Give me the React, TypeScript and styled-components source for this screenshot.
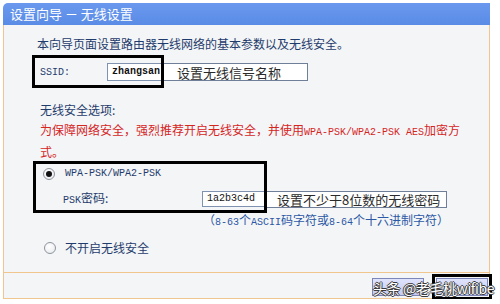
import React from "react";
import styled, { createGlobalStyle } from "styled-components";

const CJK = `"Noto Sans CJK SC", "Noto Sans", sans-serif`;
const MONO = `"Liberation Mono", "DejaVu Sans Mono", monospace`;

const GlobalStyle = createGlobalStyle`
  html, body { margin: 0; padding: 0; background: #ffffff; overflow: hidden; }
  body { font-family: ${CJK}; }
  * { box-sizing: border-box; }
`;

const Frame = styled.div`
  margin: 3px 0 0 3px;
  width: 487px;
`;

const TitleBar = styled.div`
  height: 22px;
  padding-left: 7px;
  background: linear-gradient(#6a98ee, #5a8ce6);
  border-radius: 5px 0 0 0;
  color: #ffffff;
  font: 13px/22px ${CJK};
`;

const Panel = styled.div`
  border: 1px solid #f0c68e;
  border-top: none;
  background: #f4f5f7;
`;

const Content = styled.div`
  height: 247px;
  padding: 11px 0 0 33px;
  color: #1f3c6c;
  font: 12px/16px ${CJK};
`;

const Intro = styled.div`
  line-height: 16px;
`;

const Row = styled.div<{ $align?: string }>`
  display: flex;
  align-items: ${(p) => p.$align || "center"};
`;

const MarkBox = styled.div<{ $w: number; $h: number; $shift: number }>`
  width: ${(p) => p.$w}px;
  height: ${(p) => p.$h}px;
  margin-left: ${(p) => p.$shift}px;
  border: 3px solid #000000;
  flex: none;
`;

const SsidBox = styled(MarkBox)`
  margin-top: 3px;
  display: flex;
  align-items: center;
  padding-left: 5px;
`;

const Label = styled.span<{ $w: number }>`
  width: ${(p) => p.$w}px;
  flex: none;
  white-space: nowrap;
`;

const Mono = styled.span<{ $bold?: boolean }>`
  font-family: ${MONO};
  font-size: 10px;
  font-weight: ${(p) => (p.$bold ? 700 : 400)};
`;

const Field = styled.div<{ $w: number; $h: number }>`
  width: ${(p) => p.$w}px;
  height: ${(p) => p.$h}px;
  flex: none;
  background: #ffffff;
  border: 1px solid #7f93b0;
  border-right: none;
  padding-left: 4px;
  display: flex;
  align-items: center;
  color: #111111;
  overflow: hidden;
`;

const Note = styled.div<{ $w: number; $h: number; $mt?: number; $mb?: number; $pl?: number }>`
  width: ${(p) => p.$w}px;
  height: ${(p) => p.$h}px;
  margin-top: ${(p) => p.$mt || 0}px;
  margin-bottom: ${(p) => p.$mb || 0}px;
  padding-left: ${(p) => p.$pl ?? 13}px;
  flex: none;
  background: #ffffff;
  border: 1px solid #6f7f99;
  border-left: none;
  display: flex;
  align-items: center;
  color: #2a2a2a;
  font: 13px/1 ${CJK};
  white-space: nowrap;
`;

const SectionTitle = styled.div`
  margin-top: 13px;
  padding-left: 3px;
  line-height: 18px;
`;

const Warning = styled.div`
  margin-top: 1px;
  padding-left: 3px;
  line-height: 19px;
  color: #d4251f;
  white-space: nowrap;
`;

const SecBox = styled(MarkBox)`
  display: flex;
  flex-direction: column;
  padding-top: 1px;
  gap: 7px;
`;

const OptionRow = styled.div<{ $pl: number; $gap: number }>`
  display: flex;
  align-items: center;
  height: 18px;
  padding-left: ${(p) => p.$pl}px;
  gap: ${(p) => p.$gap}px;
  white-space: nowrap;
`;

const PskRow = styled.div`
  display: flex;
  align-items: center;
  height: 18px;
  padding-left: 27px;
`;

const Radio = styled.span<{ $checked?: boolean }>`
  width: 12px;
  height: 12px;
  flex: none;
  border-radius: 50%;
  border: 1px solid #8d939c;
  background: radial-gradient(circle at 40% 35%, #ffffff, #e6e8ec);
  display: inline-flex;
  align-items: center;
  justify-content: center;
  &::after {
    content: "";
    width: 6px;
    height: 6px;
    border-radius: 50%;
    background: ${(p) => (p.$checked ? "#111111" : "transparent")};
  }
`;

const Hint = styled.div`
  padding-left: 166px;
  line-height: 14px;
  color: #2b58a4;
  white-space: nowrap;
`;

const OffRow = styled(OptionRow)`
  margin-top: 9px;
`;

const Footer = styled.div`
  position: relative;
  height: 26px;
  border-top: 1px solid #f0c68e;
  padding: 3px 1px 0 0;
  display: flex;
  justify-content: flex-end;
  align-items: center;
  gap: 12px;
`;

const NavButton = styled.button<{ $marked?: boolean }>`
  width: 52px;
  height: 18px;
  padding: 0;
  background: linear-gradient(#dfe3fb, #c5cbee);
  border: 1px solid #7d86b8;
  outline: ${(p) => (p.$marked ? "3px solid #000000" : "none")};
  outline-offset: 1px;
`;

const Watermark = styled.span`
  position: absolute;
  left: 369px;
  top: 5px;
  font: 14px/20px ${CJK};
  color: #ffffff;
  white-space: nowrap;
  letter-spacing: -0.4px;
  text-shadow: 1px 0 0 #3a3a3a, -1px 0 0 #3a3a3a, 0 1px 0 #3a3a3a, 0 -1px 0 #3a3a3a;
`;

export default function App() {
  return (
    <>
      <GlobalStyle />
      <Frame>
        <TitleBar>设置向导 － 无线设置</TitleBar>
        <Panel>
          <Content>
            <Intro>本向导页面设置路由器无线网络的基本参数以及无线安全。</Intro>
            <Row>
              <SsidBox $w={132} $h={33} $shift={-5}>
                <Label $w={67}>
                  <Mono>SSID:</Mono>
                </Label>
                <Field $w={54} $h={18}>
                  <Mono $bold>zhangsan</Mono>
                </Field>
              </SsidBox>
              <Note $w={144} $h={18} $mt={4}>
                设置无线信号名称
              </Note>
            </Row>
            <SectionTitle>无线安全选项:</SectionTitle>
            <Warning>
              为保障网络安全，强烈推荐开启无线安全，并使用<Mono>WPA-PSK/WPA2-PSK AES</Mono>加密方
              <br />
              式。
            </Warning>
            <Row $align="flex-end">
              <SecBox $w={234} $h={52} $shift={-4}>
                <OptionRow $pl={7} $gap={10}>
                  <Radio $checked />
                  <Mono>WPA-PSK/WPA2-PSK</Mono>
                </OptionRow>
                <PskRow>
                  <Label $w={139}>
                    <Mono>PSK</Mono>密码:
                  </Label>
                  <Field $w={62} $h={16}>
                    <Mono>1a2b3c4d</Mono>
                  </Field>
                </PskRow>
              </SecBox>
              <Note $w={180} $h={17} $mb={5} $pl={10}>
                设置不少于8位数的无线密码
              </Note>
            </Row>
            <Hint>
              （<Mono>8-63</Mono>个<Mono>ASCII</Mono>码字符或<Mono>8-64</Mono>个十六进制字符）
            </Hint>
            <OffRow $pl={7} $gap={9}>
              <Radio />
              <span>不开启无线安全</span>
            </OffRow>
          </Content>
          <Footer>
            <NavButton aria-label="上一步" />
            <NavButton aria-label="下一步" $marked />
            <Watermark>头条 @老毛桃wifibe</Watermark>
          </Footer>
        </Panel>
      </Frame>
    </>
  );
}
